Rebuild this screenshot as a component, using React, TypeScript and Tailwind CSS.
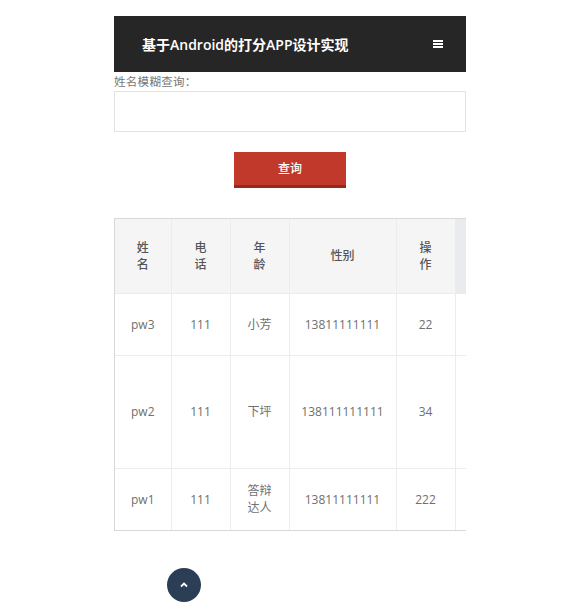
const rows = [
  { name: "pw3", tel: "111", age: ["小芳"], sex: "13811111111", op: "22", h: "h-[62px]" },
  { name: "pw2", tel: "111", age: ["下坪"], sex: "138111111111", op: "34", h: "h-[113px]" },
  { name: "pw1", tel: "111", age: ["答辩", "达人"], sex: "13811111111", op: "222", h: "h-[62px]" },
];

const cell = "border-r border-b border-[#ececec] text-center align-middle p-0";

export default function App() {
  return (
    <div
      className="relative w-[564px] h-[611px] bg-white"
      style={{ fontFamily: '"Open Sans", "Noto Sans CJK SC", sans-serif' }}
    >
      <div className="ml-[114px] w-[352px] pt-4">
        {/* top bar */}
        <div className="h-14 bg-[#262626] flex items-center justify-between pl-7 pr-[23px]">
          <span className="text-white text-[14px] font-semibold">
            基于Android的打分APP设计实现
          </span>
          <div className="flex flex-col gap-[1px] mt-[-1px]">
            <span className="block w-[10px] h-[2px] bg-white" />
            <span className="block w-[10px] h-[2px] bg-white" />
            <span className="block w-[10px] h-[2px] bg-white" />
          </div>
        </div>

        {/* search */}
        <div className="text-[11.5px] text-[#777] leading-[19px] tracking-[0.3px]">姓名模糊查询：</div>
        <input className="block w-full h-[41px] border border-[#e3e3e3] outline-none" />
        <div className="flex justify-center mt-5">
          <button className="w-28 h-9 bg-[#c0392b] border-b-[3px] border-[#922b1f] text-white text-[12px] font-medium">
            查询
          </button>
        </div>

        {/* table */}
        <div className="mt-[30px] overflow-hidden border-l border-t border-b border-[#d8d8d8]">
          <table className="table-fixed border-collapse w-[420px] text-[12px] text-[#6f6f6f]">
            <colgroup>
              <col className="w-[56px]" />
              <col className="w-[59px]" />
              <col className="w-[59px]" />
              <col className="w-[107px]" />
              <col className="w-[59px]" />
              <col className="w-[80px]" />
            </colgroup>
            <thead>
              <tr className="h-[74px] bg-[#f5f5f5] font-medium text-[#555] leading-[17px]">
                <th className={cell + " px-[20px] font-medium"}>姓名</th>
                <th className={cell + " px-[21px] font-medium"}>电话</th>
                <th className={cell + " px-[21px] font-medium"}>年龄</th>
                <th className={cell + " font-medium"}>性别</th>
                <th className={cell + " px-[21px] font-medium"}>操作</th>
                <th className={cell + " bg-[#e9ebee]"}></th>
              </tr>
            </thead>
            <tbody>
              {rows.map((r, i) => {
                const c = cell + (i === rows.length - 1 ? " border-b-0" : "");
                return (
                  <tr key={r.name} className={r.h + " leading-[17px]"}>
                    <td className={c}>{r.name}</td>
                    <td className={c}>{r.tel}</td>
                    <td className={c}>
                      {r.age.map((a) => (
                        <div key={a}>{a}</div>
                      ))}
                    </td>
                    <td className={c}>{r.sex}</td>
                    <td className={c}>{r.op}</td>
                    <td className={c}></td>
                  </tr>
                );
              })}
            </tbody>
          </table>
        </div>
      </div>

      {/* back to top */}
      <button className="absolute left-[167px] top-[568px] w-[34px] h-[34px] rounded-full bg-[#2c3e55] flex items-center justify-center">
        <svg width="8" height="6" viewBox="0 0 8 6" fill="none">
          <path d="M1 4.5 L4 1.5 L7 4.5" stroke="white" strokeWidth="1.8" />
        </svg>
      </button>
    </div>
  );
}
